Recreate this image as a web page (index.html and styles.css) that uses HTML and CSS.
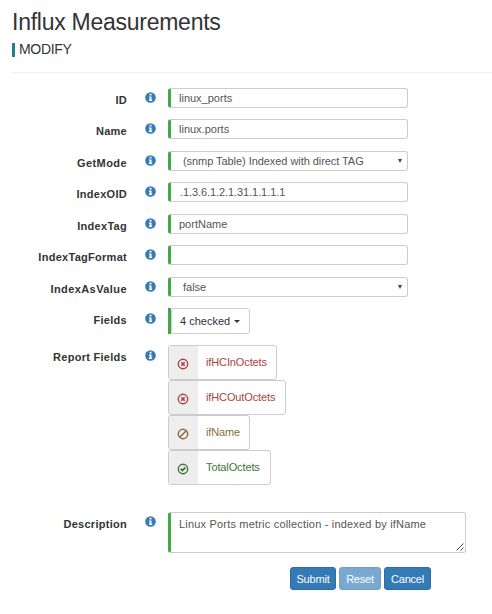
FILE: index.html
```
<!DOCTYPE html>
<html lang="en">
<head>
<meta charset="utf-8">
<title>Influx Measurements</title>
<link rel="stylesheet" href="styles.css">
</head>
<body>
<svg class="defs" width="0" height="0" aria-hidden="true">
  <symbol id="info" viewBox="0 0 11 11"><circle cx="5.5" cy="5.5" r="5.3" fill="#337ab7"/><path d="M4.6 1.8h1.9v1.6H4.6zM3.9 4.4h2.6v3.3h.7v1.2H3.9V7.7h.7V5.6h-.7z" fill="#fff"/></symbol>
  <symbol id="remove" viewBox="0 0 12 12"><circle cx="6" cy="6" r="4.7" fill="none" stroke="currentColor" stroke-width="1.4"/><path d="M4.3 4.3l3.4 3.4M7.7 4.3L4.3 7.7" stroke="currentColor" stroke-width="1.6"/></symbol>
  <symbol id="ban" viewBox="0 0 12 12"><circle cx="6" cy="6" r="4.7" fill="none" stroke="currentColor" stroke-width="1.5"/><path d="M2.8 9.2l6.4-6.4" stroke="currentColor" stroke-width="1.6"/></symbol>
  <symbol id="ok" viewBox="0 0 12 12"><circle cx="6" cy="6" r="4.7" fill="none" stroke="currentColor" stroke-width="1.4"/><path d="M3.7 5.8l1.7 1.7 3-3" fill="none" stroke="currentColor" stroke-width="1.8"/></symbol>
</svg>
<main class="page">
  <h1>Influx Measurements</h1>
  <h2>MODIFY</h2>
  <form class="form">
    <label>ID</label><svg class="info"><use href="#info"/></svg><div class="control">linux_ports</div>
    <label>Name</label><svg class="info"><use href="#info"/></svg><div class="control">linux.ports</div>
    <label class="wide">GetMode</label><svg class="info"><use href="#info"/></svg><div class="control select mode">(snmp Table) Indexed with direct TAG</div>
    <label>IndexOID</label><svg class="info"><use href="#info"/></svg><div class="control oid">.1.3.6.1.2.1.31.1.1.1.1</div>
    <label>IndexTag</label><svg class="info"><use href="#info"/></svg><div class="control">portName</div>
    <label>IndexTagFormat</label><svg class="info"><use href="#info"/></svg><div class="control"></div>
    <label class="wide">IndexAsValue</label><svg class="info"><use href="#info"/></svg><div class="control select">false</div>
    <label>Fields</label><svg class="info low"><use href="#info"/></svg><div class="multi"><button type="button" class="dropdown">4 checked<i class="caret"></i></button></div>
    <label>Report Fields</label><svg class="info low"><use href="#info"/></svg>
    <div class="reports">
      <div class="report danger w-in"><b><svg><use href="#remove"/></svg></b><span>ifHCInOctets</span></div>
      <div class="report danger w-out"><b><svg><use href="#remove"/></svg></b><span>ifHCOutOctets</span></div>
      <div class="report warning w-name"><b><svg><use href="#ban"/></svg></b><span>ifName</span></div>
      <div class="report success w-total"><b><svg><use href="#ok"/></svg></b><span>TotalOctets</span></div>
    </div>
    <label>Description</label><svg class="info"><use href="#info"/></svg>
    <div class="control area">Linux Ports metric collection - indexed by ifName<svg class="grip" viewBox="0 0 8 8"><path d="M.5 7.5l7-7M4.5 7.5l3-3" stroke="#555" fill="none"/></svg></div>
  </form>
  <div class="actions">
    <button type="button" class="submit">Submit</button><button type="button" class="reset">Reset</button><button type="button" class="cancel">Cancel</button>
  </div>
</main>
</body>
</html>
```
FILE: styles.css
```
* { box-sizing: border-box; }
body { margin: 0; background: #fff; color: #333; font: 11px/16px "Liberation Sans", Arial, sans-serif; }
.defs { position: absolute; }
.page { height: 614px; padding: 8px 0 0 12px; overflow: hidden; }
h1 { margin: 0; height: 35px; font-size: 23px; line-height: 28px; font-weight: 400; white-space: nowrap; letter-spacing: -.26px; }
h2 { margin: 0; height: 14px; padding-left: 4px; border-left: 3px solid #22808c; font-size: 14px; line-height: 13px; font-weight: 400; letter-spacing: -.3px; }
.form {
  display: grid;
  grid-template-columns: 115px 41px 298px;
  grid-template-rows: 31px 32px 31px 32px 31px 32px 31px 37px 167px 41px;
  align-items: start;
  margin-top: 15px;
  padding-top: 15px;
  border-top: 1px solid #eee;
}
label { padding-top: 4px; text-align: right; font-weight: 700; white-space: nowrap; letter-spacing: .28px; }
.wide { letter-spacing: .42px; }
.info { width: 11px; height: 11px; margin: 4px 0 0 18px; }
.low { margin-top: 5px; }
.control {
  width: 240px; height: 20px; padding: 0 8px;
  border: 1px solid #ccc; border-left: 3px solid #42a948; border-radius: 3px;
  line-height: 18px; color: #555; white-space: nowrap;
}
.select { position: relative; padding-left: 12px; }
.mode { letter-spacing: -.06px; }
.oid { padding-left: 9px; letter-spacing: -.08px; }
.select::after { content: ""; position: absolute; right: 5px; top: 7px; border: 2px solid transparent; border-top: 4px solid #444; border-bottom: 0; }
.multi { height: 26px; border-left: 3px solid #42a948; }
.dropdown { display: flex; align-items: center; width: 79px; height: 26px; padding: 0 0 0 8px; border: 1px solid #ccc; border-radius: 3px; background: #fff; color: #333; font: inherit; white-space: nowrap; }
.caret { margin: 1px 0 0 4px; border: 3px solid transparent; border-top-color: #333; border-bottom: 0; }
.report { display: flex; height: 35px; border: 1px solid #ccc; border-radius: 3px; overflow: hidden; line-height: 33px; white-space: nowrap; }
.report b { display: flex; align-items: center; padding-left: 8px; width: 29px; padding-top: 3px; background: #eee; }
.report svg { width: 12px; height: 12px; }
.report span { padding-left: 8px; letter-spacing: -.12px; }
.danger { color: #a94442; }
.warning { color: #8a6d3b; }
.success { color: #3c763d; }
.w-in { width: 109px; }
.w-out { width: 118px; }
.w-name { width: 82px; }
.w-total { width: 103px; }
.area { position: relative; width: 298px; height: 41px; line-height: 22px; letter-spacing: .19px; }
.grip { position: absolute; right: 1px; bottom: 1px; width: 8px; height: 8px; }
.actions { display: flex; gap: 3px; margin: 14px 0 0 278px; }
.actions button { height: 23px; padding: 0; border: 1px solid #2e6da4; border-radius: 3px; background: #337ab7; color: #fff; font: inherit; letter-spacing: -.2px; }
.actions .submit { width: 46px; }
.actions .reset { width: 42px; opacity: .65; }
.actions .cancel { width: 47px; }
```
